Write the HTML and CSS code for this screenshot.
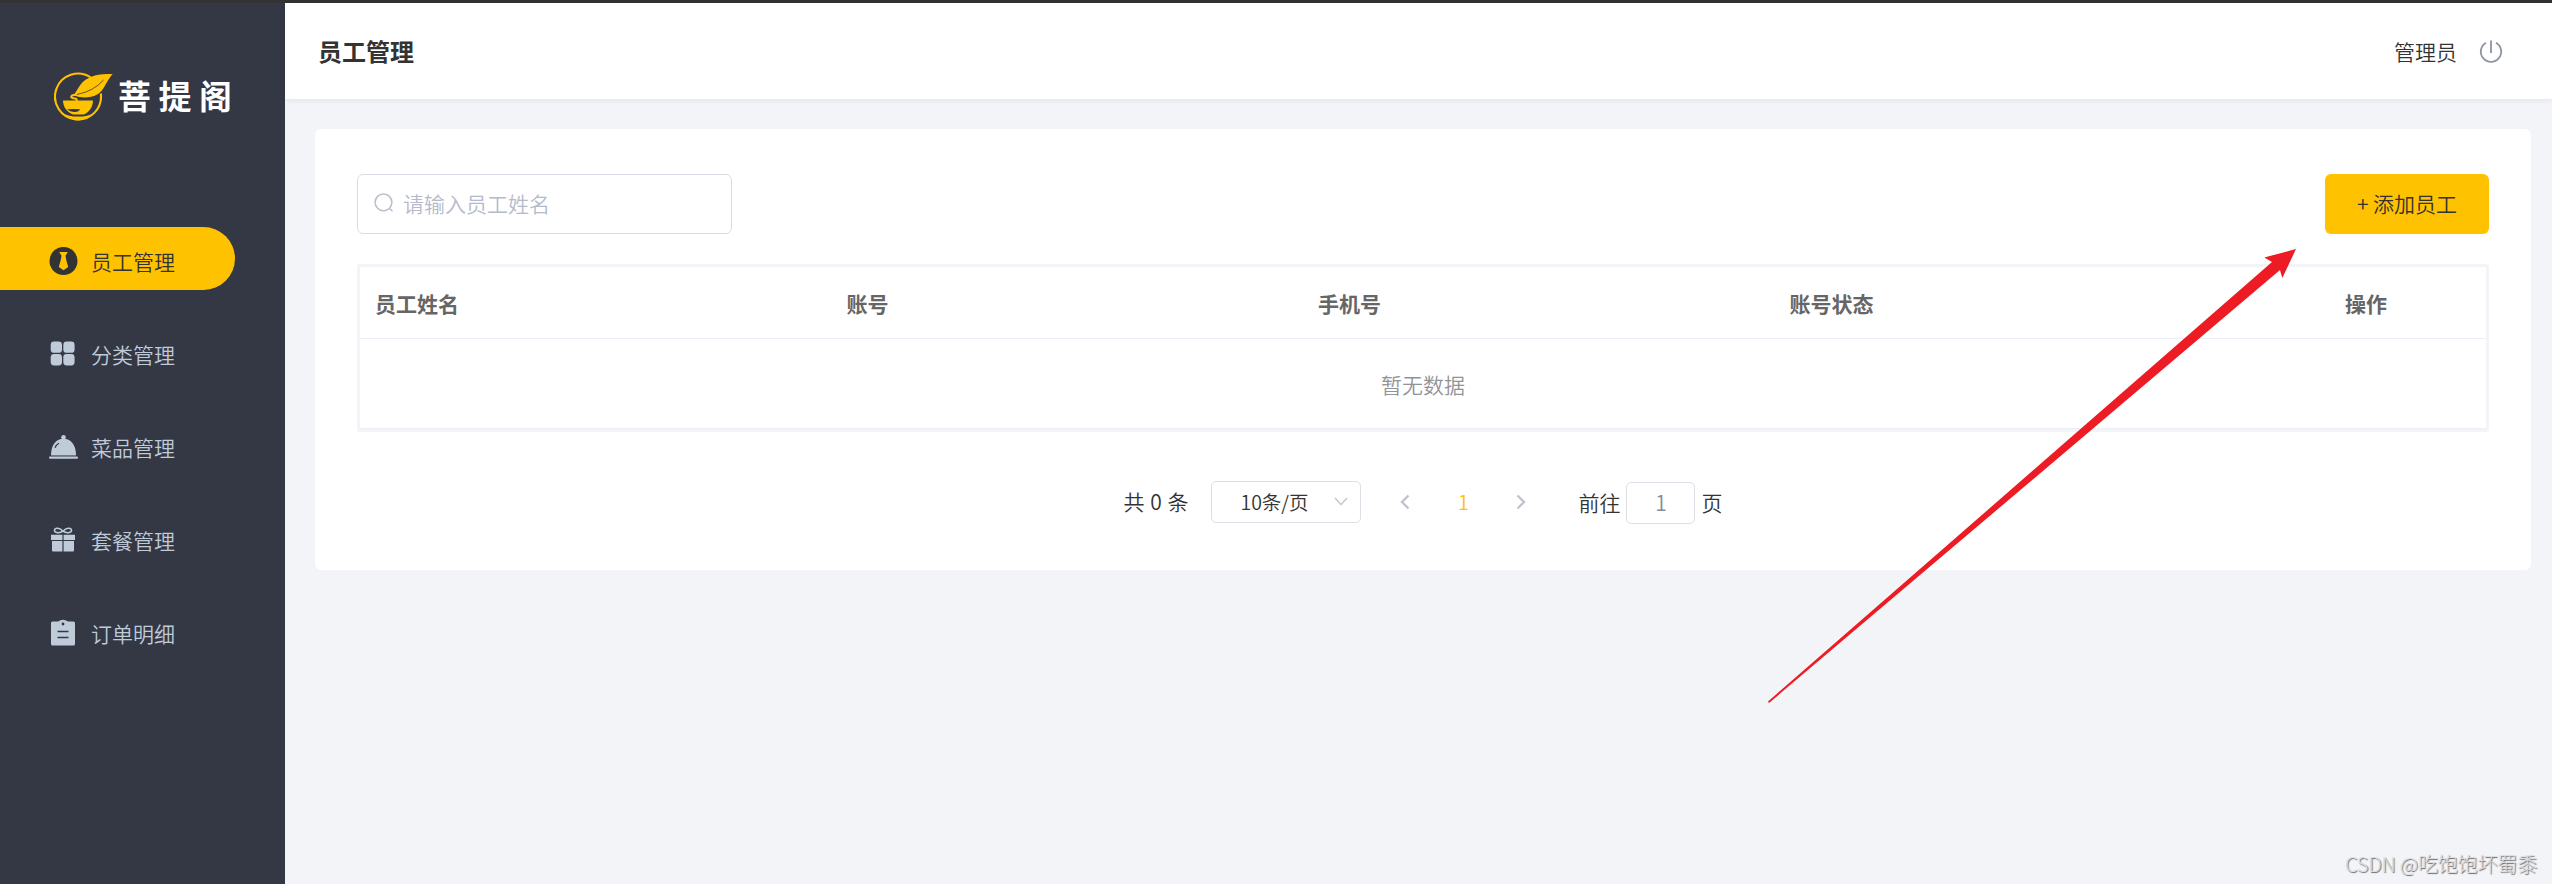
FILE: index.html
```html
<!DOCTYPE html>
<html lang="zh-CN">
	<head>
		<title>菩提阁</title>
		<meta charset="utf-8"/>
		<link rel="stylesheet" href="styles.css">
	</head>
	<body>
		<div class="app">
			<aside class="sidebar">
				<div class="logo">
					<svg width="60" height="50" viewBox="0 0 60 50">
						<path d="M36.8 5.5A23 23 0 1 0 46.8 21.5" fill="none" stroke="#ffc200" stroke-width="2.1"/>
						<path d="M58.7 2.2C43 1 33 5 27 12C24 16 22 20 19.5 23.5C30 27 41 26 47.5 19C52 13 54.5 6 58.7 2.2Z" fill="#ffc200"/>
						<path d="M23 22.5Q40 19 49.5 8" fill="none" stroke="#343744" stroke-width="0.8"/>
						<path d="M22 22.7C15.5 23 16 26.5 21 26.5Q23.5 27 22.5 29.5" fill="none" stroke="#ffc200" stroke-width="2"/>
						<path d="M9 28.5H39C39 35 35 40 30 42.5H19C13 40 9 35 9 28.5Z" fill="#ffc200"/>
						<path d="M13 37.3Q19 36.7 26 37.3Q24.5 40.5 20 40Q16 39.7 13 37.3Z" fill="#343744"/>
						<path d="M10 42Q14 43.5 19.5 44.5H29Q34 43.5 38 42L33 46.5Q24 49 15 46.5Z" fill="#ffc200"/>
					</svg>
					<span class="logoText">菩提阁</span>
				</div>
				<ul class="menu">
					<li class="active">
						<svg width="30" height="30" viewBox="0 0 30 30">
							<circle cx="15.5" cy="15" r="14" fill="#333"/>
							<path d="M11.2 6H19.8L17.5 9.7Q18 14 20.2 21L15.5 24.3L10.8 21Q13 14 13.5 9.7Z" fill="#ffc200"/>
						</svg>
						<span>员工管理</span></li>
					<li>
						<svg width="30" height="30" viewBox="0 0 30 30">
							<rect x="2.7" y="2.5" width="11.3" height="11.3" rx="3.4"/>
							<rect x="15.3" y="2.5" width="11.3" height="11.3" rx="3.4"/>
							<rect x="2.7" y="15.1" width="11.3" height="11.3" rx="3.4"/>
							<rect x="15.3" y="15.1" width="11.3" height="11.3" rx="3.4"/>
						</svg>
						<span>分类管理</span></li>
					<li>
						<svg width="30" height="30" viewBox="0 0 30 30">
							<circle cx="15.5" cy="5.3" r="2.3"/>
							<path d="M3 23.3C3 12.3 8.5 6.8 15.5 6.8S28 12.3 28 23.3Z"/>
							<rect x="1" y="24.4" width="29" height="2.4" rx="1"/>
							<path d="M7 15.8Q8 12.8 11 11.3" fill="none" stroke="#343744" stroke-width="1.2"/>
							<path d="M3 23.8H28" stroke="#7d8693" stroke-width="1"/>
						</svg>
						<span>菜品管理</span></li>
					<li>
						<svg width="30" height="30" viewBox="0 0 30 30">
							<path d="M15 6.2C12 2.9 7 2.1 6.5 5.2S12 8.4 15 6.2C18 2.9 23 2.1 23.5 5.2S18 8.4 15 6.2Z" fill="none" stroke="#bfcbd9" stroke-width="1.6"/>
							<path d="M3 9.8H14.4V15H3ZM15.6 9.8H27V15H15.6ZM4 16H14.4V26.5H5Q4 26.5 4 25.5ZM15.6 16H26V25.5Q26 26.5 25 26.5H15.6Z"/>
						</svg>
						<span>套餐管理</span></li>
					<li>
						<svg width="30" height="30" viewBox="0 0 30 30">
							<path d="M4.5 3.4H10Q15 0 20 3.4H25.5Q27 3.4 27 4.9V26Q27 27.5 25.5 27.5H4.5Q3 27.5 3 26V4.9Q3 3.4 4.5 3.4Z"/>
							<circle cx="15" cy="6" r="1.4" fill="#343744"/>
							<path d="M9.5 13.5H20.5M9.5 19.5H20.5" stroke="#343744" stroke-width="1.6"/>
						</svg>
						<span>订单明细</span></li>
				</ul>
			</aside>
			<div class="main">
				<header class="navbar">
					<h1>员工管理</h1>
					<div class="user">
						<span>管理员</span>
						<svg width="24" height="24" viewBox="0 0 24 24" fill="none" stroke="#8c93a1" stroke-width="1.8">
							<path d="M7 3.7A10.2 10.2 0 1 0 17 3.7M12 1.5V14"/>
						</svg>
					</div>
				</header>
				<main class="card">
					<div class="tableBar">
						<div class="search">
							<svg width="20" height="20" viewBox="0 0 20 20" fill="none" stroke="#b8bdcb" stroke-width="1.5">
								<circle cx="9.5" cy="9.3" r="8.4"/>
								<path d="M15.3 15.3L18.5 18.2"/>
							</svg>
							<span>请输入员工姓名</span>
						</div>
						<button class="add">+ 添加员工</button>
					</div>
					<table class="tableBox">
						<thead>
							<tr>
								<th>员工姓名</th>
								<th>账号</th>
								<th>手机号</th>
								<th>账号状态</th>
								<th class="action">操作</th>
							</tr>
						</thead>
						<tbody>
							<tr><td colspan="5">暂无数据</td></tr>
						</tbody>
					</table>
					<div class="pagination">
						<span class="total">共 0 条</span>
						<div class="sizes">
							<span>10条/页</span>
							<svg width="14" height="9" viewBox="0 0 14 9" fill="none" stroke="#c0c4cc" stroke-width="1.3"><path d="M1 1L7 7.5L13 1"/></svg>
						</div>
						<div class="pager">
							<svg width="10" height="18" viewBox="0 0 10 18" fill="none" stroke="#c0c4cc" stroke-width="2.4"><path d="M8.5 2.5L2 9L8.5 15.5"/></svg>
							<span class="current">1</span>
							<svg width="10" height="18" viewBox="0 0 10 18" fill="none" stroke="#c0c4cc" stroke-width="2.4"><path d="M1.5 2.5L8 9L1.5 15.5"/></svg>
						</div>
						<div class="jump">
							<span class="label">前往</span>
							<span class="page">1</span>
							<span class="label">页</span>
						</div>
					</div>
				</main>
			</div>
		</div>
		<svg class="arrow" width="530" height="456" viewBox="0 0 530 456">
			<path d="M529 1L497.3 9.5L505 14L1 453.5L2 455L513 22L515.3 30Z" fill="#ed1c24"/>
		</svg>
		<div class="watermark">CSDN @吃饱饱坏蜀黍</div>
	</body>
</html>
```
FILE: styles.css
```css
* { box-sizing:border-box }
body {
	margin:0;
	height:884px;
	overflow:hidden;
	position:relative;
	font-family:"Noto Sans CJK SC", sans-serif;
	font-weight:350;
	font-size:21px;
	line-height:30px;
	color:#333;
	background:#f3f4f7;
}
svg { display:block; flex:none; }

.app {
	display:flex;
	height:884px;
	border-top:3px solid #333;
}

.sidebar {
	width:285px;
	flex:none;
	background:#343744;
}
.logo {
	display:flex;
	align-items:center;
	height:50px;
	margin:69px 0 0 54px;
}
.logoText {
	margin-left:4px;
	padding-bottom:5px;
	font-size:33px;
	font-weight:700;
	letter-spacing:7.5px;
	color:#fff;
	white-space:nowrap;
}
.menu {
	list-style:none;
	margin:105px 0 0;
	padding:0;
	display:flex;
	flex-direction:column;
	gap:30px;
}
.menu li {
	display:flex;
	align-items:center;
	gap:13px;
	width:235px;
	height:63px;
	padding:4px 0 0 48px;
	color:#bfcbd9;
	fill:#bfcbd9;
}
.menu li.active {
	color:#333;
	background:#ffc200;
	border-radius:0 32px 32px 0;
}

.main {
	flex:1;
}
.navbar {
	display:flex;
	align-items:center;
	justify-content:space-between;
	height:96px;
	padding:0 49px 0 33px;
	background:#fff;
	box-shadow:0 1px 6px rgba(0,21,41,.08);
}
.navbar h1 {
	margin:0;
	font-size:24px;
	font-weight:700;
}
.user {
	display:flex;
	align-items:center;
	gap:22px;
}

.card {
	margin:30px 21px 0 30px;
	height:441px;
	padding:45px 42px;
	background:#fff;
	border-radius:6px;
}
.tableBar {
	display:flex;
	justify-content:space-between;
	margin-bottom:30px;
}
.search {
	display:flex;
	align-items:center;
	gap:9px;
	width:375px;
	height:60px;
	padding:0 0 2px 16px;
	border:1px solid #d8dce5;
	border-radius:6px;
	color:#b5bacb;
}
.add {
	width:164px;
	height:60px;
	padding:0 0 2px;
	border:0;
	border-radius:6px;
	background:#ffc200;
	color:#333;
	font:inherit;
}

.tableBox {
	width:100%;
	table-layout:fixed;
	border:3px solid #f3f4f7;
	border-radius:3px;
	border-spacing:0;
}
.tableBox th {
	height:72px;
	padding:0 15px;
	text-align:left;
	font-weight:700;
	color:#666;
	border-bottom:1px solid #ebeef5;
}
.tableBox th.action {
	width:240px;
	text-align:center;
}
.tableBox td {
	height:90px;
	padding:0;
	text-align:center;
	color:#909399;
	border-bottom:1px solid #ebeef5;
}

.pagination {
	display:flex;
	justify-content:center;
	align-items:center;
	height:42px;
	margin-top:49px;
}
.total {
	padding-bottom:2px;
	word-spacing:1px;
}
.sizes {
	display:flex;
	align-items:center;
	justify-content:space-between;
	width:150px;
	height:42px;
	margin-left:23px;
	padding:0 12px 1px 28px;
	border:1px solid #dcdfe6;
	border-radius:5px;
	font-size:19.5px;
}
.pager {
	display:flex;
	align-items:center;
	justify-content:space-between;
	width:126px;
	margin:0 52px 0 39px;
}
.current {
	padding-bottom:1px;
	color:#ffc200;
	font-size:20px;
}
.jump {
	display:flex;
	align-items:center;
	gap:6px;
	margin-top:1px;
}
.label {
	padding-bottom:2px;
}
.page {
	width:69px;
	height:42px;
	line-height:38px;
	text-align:center;
	color:#878b98;
	border:1px solid #dcdfe6;
	border-radius:5px;
}

/* overlays */
.arrow {
	position:absolute;
	left:1767px;
	top:248px;
}
.watermark {
	position:absolute;
	right:15px;
	bottom:5px;
	font-size:20px;
	font-weight:300;
	letter-spacing:-0.15px;
	color:#dcdde0;
	text-shadow:1px 1px 1px #666;
}
```
